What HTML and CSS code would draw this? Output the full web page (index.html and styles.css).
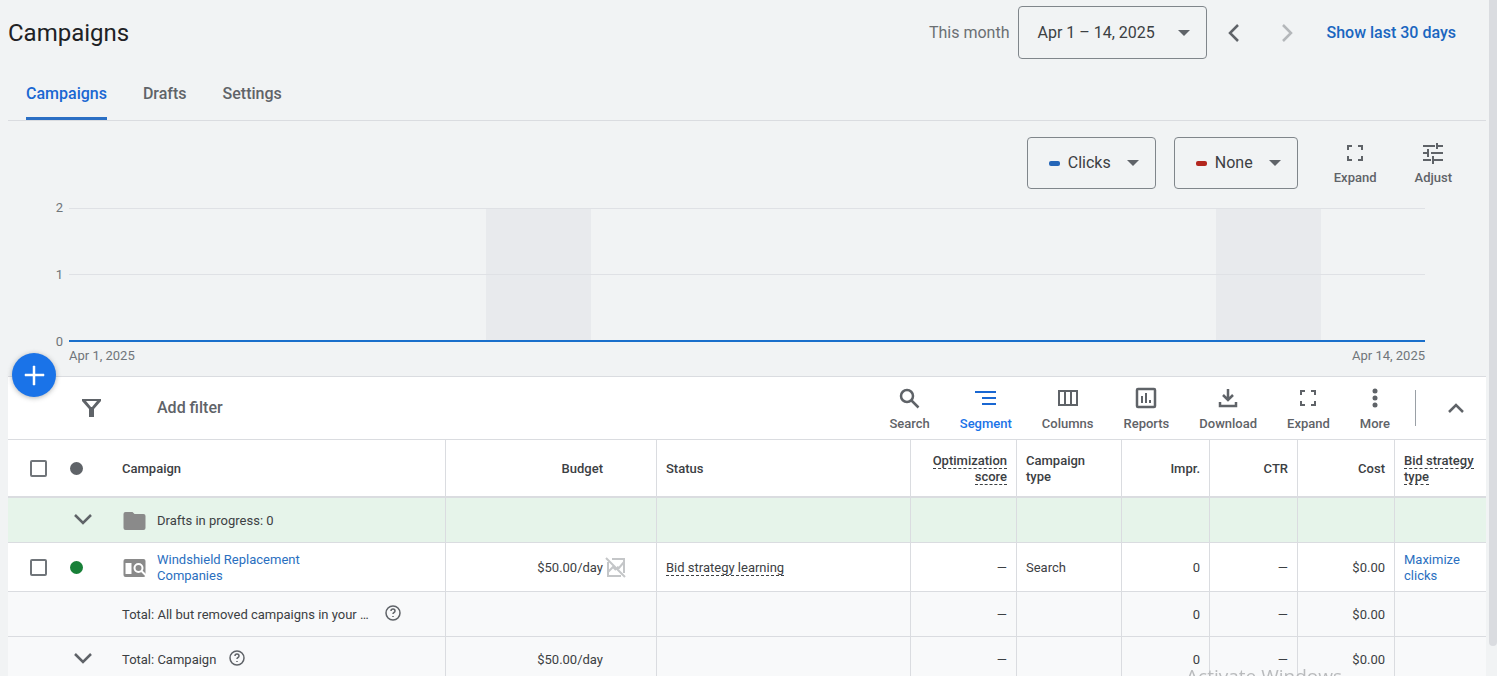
FILE: index.html
```html
<!DOCTYPE html>
<html lang="en">
<head>
<meta charset="utf-8">
<title>Campaigns</title>
<link rel="stylesheet" href="styles.css">
</head>
<body>
<div class="page">
<main class="main">
  <header class="header">
    <h1 class="title">Campaigns</h1>
    <div class="range">
      <span class="range-label" id="range-label">This month</span>
      <button class="outlined range-button" type="button" aria-labelledby="range-label range-value"><span id="range-value">Apr 1 – 14, 2025</span><svg class="caret" viewBox="0 0 12 6"><path d="M0 0h12L6 6z"/></svg></button>
      <div class="range-steps">
        <button class="step" type="button" aria-label="Previous period"><svg width="24" height="24" viewBox="0 0 24 24"><path d="M16 4l-8 8 8 8" class="line"/></svg></button>
        <button class="step" type="button" aria-label="Next period" disabled><svg width="24" height="24" viewBox="0 0 24 24"><path d="M8 4l8 8-8 8" class="line"/></svg></button>
      </div>
      <a class="range-link" href="#">Show last 30 days</a>
    </div>
  </header>

  <nav class="tabs">
    <a class="tab tab-active" href="#">Campaigns</a>
    <a class="tab" href="#">Drafts</a>
    <a class="tab" href="#">Settings</a>
  </nav>

  <section class="chart">
    <div class="chart-tools">
      <div class="outlined metric metric-wide">
        <span class="swatch swatch-blue"></span>
        <select class="metric-select" aria-label="First metric"><option>Clicks</option></select>
        <svg class="caret" viewBox="0 0 12 6"><path d="M0 0h12L6 6z"/></svg>
      </div>
      <div class="outlined metric">
        <span class="swatch swatch-red"></span>
        <select class="metric-select" aria-label="Second metric"><option>None</option></select>
        <svg class="caret" viewBox="0 0 12 6"><path d="M0 0h12L6 6z"/></svg>
      </div>
      <div class="chart-actions">
        <button class="tool" type="button"><svg class="icon" viewBox="0 0 24 24"><path d="M4 9V4h5v2H6v3zM15 4h5v5h-2V6h-3zM4 15h2v3h3v2H4zM18 15h2v5h-5v-2h3z"/></svg>Expand</button>
        <button class="tool" type="button"><svg class="icon" viewBox="0 0 24 24"><path d="M2 4h12v2H2zM15 2h2v2h5v2h-5v2h-2zM2 11h4V8h2v8H6v-3H2zM10 11h12v2H10zM2 18h8v2H2zM11 15h2v3h9v2h-9v3h-2z"/></svg>Adjust</button>
      </div>
    </div>
    <div class="graph">
      <div class="axis"><span>2</span><span>1</span><span>0</span></div>
      <div class="plot"><i class="band band-first"></i><i class="band band-second"></i><i class="gridlines"></i></div>
      <div class="dates"><span>Apr 1, 2025</span><span>Apr 14, 2025</span></div>
    </div>
  </section>

  <section class="panel">
    <button class="fab" type="button" aria-label="New campaign"><svg width="24" height="24" viewBox="0 0 24 24"><path d="M11 3h2v8h9v2h-9v9h-2v-9H3v-2h8z" stroke="currentColor" stroke-width=".5"/></svg></button>
    <div class="toolbar">
      <svg class="icon filter-icon" viewBox="0 0 24 24"><path fill-rule="evenodd" d="M3 3h19v2l-7 8v8h-5v-8L3 5zm4 2l5 6h1l5-6z"/></svg>
      <button class="add-filter" type="button">Add filter</button>
      <div class="tools">
        <button class="tool" type="button"><svg class="icon" viewBox="0 0 24 24"><circle cx="9" cy="9" r="6" class="line"/><path d="M13.500 13.500l7 7" class="line"/></svg>Search</button>
        <button class="tool tool-active" type="button"><svg class="icon" viewBox="0 0 24 24"><path d="M1 4h21v2H1zM8 10h14v2H8zM8 16h14v2H8z"/></svg>Segment</button>
        <button class="tool" type="button"><svg class="icon" viewBox="0 0 24 24"><path fill-rule="evenodd" d="M2 3h20v16H2zM4 5v12h4V5zm6 0v12h4V5zm6 0v12h4V5z"/></svg>Columns</button>
        <button class="tool" type="button"><svg class="icon" viewBox="0 0 24 24"><rect x="3" y="2" width="18" height="18" rx="1" class="line"/><path d="M7 9h2v7H7zM11 6h2v10h-2zM15 13h2v3h-2z"/></svg>Reports</button>
        <button class="tool" type="button"><svg class="icon" viewBox="0 0 24 24"><path d="M12 2v11M7 8l5 5 5-5M4 15v4h16v-4" class="line"/></svg>Download</button>
        <button class="tool" type="button"><svg class="icon" viewBox="0 0 24 24"><path d="M4 8V3h5v2H6v3zM15 3h5v5h-2V5h-3zM4 14h2v3h3v2H4zM18 14h2v5h-5v-2h3z"/></svg>Expand</button>
        <button class="tool" type="button"><svg class="icon" viewBox="0 0 24 24"><circle cx="12" cy="4" r="2.500"/><circle cx="12" cy="11" r="2.500"/><circle cx="12" cy="18" r="2.500"/></svg>More</button>
        <span class="divider"></span>
        <button class="collapse" type="button" aria-label="Collapse"><svg width="24" height="24" viewBox="0 0 24 24"><path d="M5 16l7-7 7 7" class="line"/></svg></button>
      </div>
    </div>

    <table class="table">
      <colgroup><col class="c-check"><col class="c-dot"><col><col class="c-budget"><col class="c-status"><col class="c-score"><col class="c-type"><col class="c-num"><col class="c-num"><col class="c-cost"><col class="c-bid"></colgroup>
      <thead>
        <tr>
          <th class="plain check"><input type="checkbox" aria-label="Select all campaigns"></th>
          <th class="plain"><span class="dot"></span></th>
          <th class="name">Campaign</th>
          <th class="num budget">Budget</th>
          <th>Status</th>
          <th class="num"><span class="hint">Optimization score</span></th>
          <th>Campaign type</th>
          <th class="num">Impr.</th>
          <th class="num">CTR</th>
          <th class="num">Cost</th>
          <th><span class="hint">Bid strategy type</span></th>
        </tr>
      </thead>
      <tbody>
        <tr class="drafts">
          <td class="plain"></td>
          <td class="plain"><button class="toggle" type="button" aria-label="Show drafts"><svg width="20" height="20" viewBox="0 0 20 20"><path d="M2 5l8 8 8-8" class="line"/></svg></button></td>
          <td class="name"><div class="with-icon"><svg class="type-icon" viewBox="0 0 24 20"><path d="M3 1h7l2 2h9q2 0 2 2v12q0 2-2 2H3q-2 0-2-2V3q0-2 2-2z"/></svg>Drafts in progress: 0</div></td>
          <td></td><td></td><td></td><td></td><td></td><td></td><td></td><td></td>
        </tr>
        <tr class="campaign">
          <td class="plain check"><input type="checkbox" aria-label="Select Windshield Replacement Companies"></td>
          <td class="plain"><span class="dot dot-on"></span></td>
          <td class="name"><div class="with-icon"><svg class="type-icon" viewBox="0 0 24 20"><rect x="1" y="1" width="22" height="18" rx="2"/><path class="cut" d="M3 5h6v11H3z"/><circle class="cut-line" cx="16" cy="10" r="4"/><path class="cut-line" d="M19 13l5 5"/></svg><a class="link campaign-link" href="#">Windshield Replacement Companies</a></div></td>
          <td class="num"><div class="amount">$50.00/day<svg width="22" height="22" viewBox="0 0 22 22" class="no-graph"><path d="M7 2h12v14M3 5v14h13M3 15l5-5 3 3M12 10l2 1 5-6M1 1l19 19"/></svg></div></td>
          <td><span class="hint">Bid strategy learning</span></td>
          <td class="num dash">—</td>
          <td>Search</td>
          <td class="num">0</td>
          <td class="num dash">—</td>
          <td class="num">$0.00</td>
          <td><a class="link" href="#">Maximize clicks</a></td>
        </tr>
        <tr class="total">
          <td class="plain"></td><td class="plain"></td>
          <td class="name"><div class="with-help"><span class="total-label">Total: All but removed campaigns in your …</span><svg class="help" viewBox="0 0 18 18"><circle cx="9" cy="9" r="7"/><path d="M7 7q0-2 2-2t2 2q0 1-1 1.500T9 10M9 12v1"/></svg></div></td>
          <td></td><td></td>
          <td class="num dash">—</td><td></td>
          <td class="num">0</td><td class="num dash">—</td><td class="num">$0.00</td><td></td>
        </tr>
        <tr class="total">
          <td class="plain"></td>
          <td class="plain"><button class="toggle" type="button" aria-label="Show campaign totals"><svg width="20" height="20" viewBox="0 0 20 20"><path d="M2 5l8 8 8-8" class="line"/></svg></button></td>
          <td class="name"><div class="with-help"><span>Total: Campaign</span><svg class="help" viewBox="0 0 18 18"><circle cx="9" cy="9" r="7"/><path d="M7 7q0-2 2-2t2 2q0 1-1 1.500T9 10M9 12v1"/></svg></div></td>
          <td class="num budget">$50.00/day</td><td></td>
          <td class="num dash">—</td><td></td>
          <td class="num">0</td><td class="num dash">—</td><td class="num">$0.00</td><td></td>
        </tr>
      </tbody>
    </table>
  </section>
</main>
<div class="scrollbar"><div class="thumb"></div></div>
</div>
<div class="watermark">Activate Windows</div>
</body>
</html>
```

FILE: styles.css
```css
* { box-sizing: border-box; }
body {
  margin: 0;
  height: 100vh;
  overflow: hidden;
  background: #f1f3f4;
  color: #3c4043;
  font: 13px/16px Roboto, sans-serif;
}
button, select { font: inherit; color: inherit; background: none; border: 0; padding: 0; }
a { text-decoration: none; color: #1a66c0; }
svg { display: block; flex: none; fill: currentColor; }
.line { fill: none; stroke: currentColor; stroke-width: 2.5; }

.page { display: flex; height: 100vh; }
.main { flex: 1; min-width: 0; padding: 0 3px 0 8px; }
.scrollbar { width: 8px; background: #f1f3f4; }
.thumb { height: 646px; max-height: 96%; background: #dadce0; border-radius: 0 0 4px 4px; }

.header { display: flex; justify-content: space-between; align-items: center; height: 65px; padding-right: 30px; }
.title { margin: 0; font: 400 24px/32px Roboto, sans-serif; color: #202124; }
.range { display: flex; align-items: center; font-size: 16px; line-height: 20px; }
.range-label { color: #6b6f73; }
.outlined { display: flex; align-items: center; height: 53px; border: 1px solid #80868b; border-radius: 4px; }
.range-button { justify-content: space-between; width: 189px; margin: 0 7px 0 9px; padding: 0 16px 0 18px; }
.caret { width: 12px; height: 6px; color: #5f6368; }
.range-steps { display: flex; gap: 13px; }
.step { display: grid; place-items: center; width: 40px; height: 40px; color: #5f6368; }
.step:disabled { color: #b4b7ba; }
.range-link { margin-left: 19px; font-weight: 500; }

.tabs { display: flex; gap: 36px; height: 56px; padding: 0 18px; border-bottom: 1px solid #dadce0; }
.tab { display: flex; align-items: center; padding-top: 6px; border-bottom: 3px solid transparent; font: 500 16px/20px Roboto, sans-serif; color: #5f6368; }
.tab-active { color: #1967d2; border-bottom-color: #2b6fc4; }

.chart { padding-top: 16px; }
.chart-tools { display: flex; justify-content: flex-end; gap: 18px; padding-right: 34px; height: 71px; font-size: 16px; line-height: 20px; }
.metric { width: 124px; height: 52px; padding: 0 16px 0 21px; }
.metric-wide { width: 129px; }
.metric-select { flex: 1; min-width: 0; margin-left: 8px; appearance: none; }
.swatch { width: 11px; height: 5px; border-radius: 2px; }
.swatch-blue { background: #2566b8; }
.swatch-red { background: #b3261e; }
.chart-actions { display: flex; gap: 38px; margin: 2px 0 0 18px; }

.tool { display: flex; flex-direction: column; align-items: center; gap: 5px; align-self: flex-start; padding-top: 2px; font: 500 13px/16px Roboto, sans-serif; color: #5f6368; }
.tool-active { color: #1a73e8; }
.icon { width: 24px; height: 24px; color: #5f6368; }
.tool-active .icon { color: #1967d2; }

.graph { display: grid; grid-template-columns: 55px 1fr; column-gap: 6px; padding-right: 61px; height: 168px; grid-template-rows: 134px 1fr; color: #70757a; }
.axis { display: flex; flex-direction: column; justify-content: space-between; align-items: flex-end; margin: -8px 0; }
.plot { display: grid; grid-template-columns: repeat(13, 1fr); border-top: 1px solid #dfe1e5; border-bottom: 2px solid #1a6fcb; }
.band { background: #e8eaed; grid-row: 1; }
.band-first { grid-column: 5; }
.band-second { grid-column: 12; }
.gridlines { grid-column: 1 / -1; grid-row: 1; align-self: center; height: 1px; background: #dfe1e5; }
.dates { grid-column: 2; display: flex; justify-content: space-between; padding-top: 6px; }

.panel { position: relative; background: #fff; border-top: 1px solid #dadce0; }
.fab { position: absolute; left: 4px; top: -24px; display: grid; place-items: center; width: 44px; height: 44px; border-radius: 50%; background: #1a73e8; color: #fff; box-shadow: 0 1px 5px rgba(60, 64, 67, .4); }
.toolbar { display: flex; align-items: center; height: 63px; padding: 0 18px 0 71px; border-bottom: 1px solid #dadce0; }
.add-filter { margin-left: 54px; font: 500 16px/20px Roboto, sans-serif; color: #5f6368; }
.tools { display: flex; align-items: center; gap: 30px; margin-left: auto; }
.divider { width: 1px; height: 36px; margin: 0 -2px 0 -5px; background: #9aa0a6; }
.collapse { color: #5f6368; }

.table { width: 100%; table-layout: fixed; border-collapse: separate; border-spacing: 0; }
.c-check { width: 50px; }
.c-dot { width: 64px; }
.c-budget { width: 211px; }
.c-status { width: 254px; }
.c-score { width: 106px; }
.c-type { width: 105px; }
.c-num { width: 88px; }
.c-cost { width: 97px; }
.c-bid { width: 91px; }
th, td { padding: 1px 9px 0; text-align: left; vertical-align: middle; border-right: 1px solid #dadce0; border-bottom: 1px solid #dadce0; font-weight: 400; }
th { height: 58px; font-weight: 500; border-bottom-width: 2px; }
th:last-child, td:last-child { border-right: 0; }
td { height: 45px; }
.plain { padding: 0; border-right: 0; }
.name { padding-left: 0; }
.num { text-align: right; }
.budget { padding-right: 53px; }
.drafts td { background: #e6f4ea; }
.campaign td { height: 49px; }
.total td { background: #f8f9fa; }
.check { padding-left: 22px; }
.check input { display: block; appearance: none; width: 17px; height: 17px; margin: 0; border: 2px solid #70757a; border-radius: 2px; background: #fff; }
.dot { display: block; width: 13px; height: 13px; margin-left: 12px; border-radius: 50%; background: #5f6368; }
.dot-on { background: #188038; }
.toggle { display: block; margin-left: 15px; color: #5f6368; }
.hint { border-bottom: 1px dashed #3c4043; line-height: 15px; }
.with-icon { display: flex; align-items: center; gap: 10px; }
.type-icon { width: 25px; height: 20px; color: #8a8a8a; }
.cut { fill: #fff; }
.cut-line { fill: none; stroke: #fff; stroke-width: 2; }
.campaign-link { max-width: 160px; }
.link { color: #2a6fc0; }
.amount { display: flex; justify-content: flex-end; align-items: center; gap: 2px; padding-right: 20px; }
.no-graph path { fill: none; stroke: #c4c6c8; stroke-width: 2; }
.with-help { display: flex; align-items: center; gap: 12px; }
.total-label { min-width: 250px; white-space: nowrap; }
.help { width: 18px; height: 18px; margin-bottom: 4px; }
.help circle, .help path { fill: none; stroke: #5f6368; stroke-width: 1.5; }

.watermark { position: fixed; right: 155px; bottom: -14px; font: 400 19px/28px "Open Sans", sans-serif; color: #b9bbbd; }
```
